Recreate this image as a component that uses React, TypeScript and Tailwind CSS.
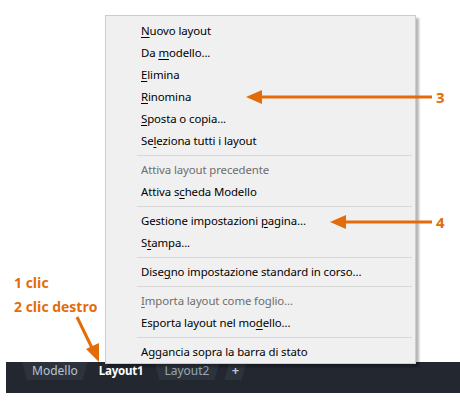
import React from "react";

type Item = { parts: [string, string, string]; disabled?: boolean } | "sep";

const items: Item[] = [
  { parts: ["", "N", "uovo layout"] },
  { parts: ["Da ", "m", "odello..."] },
  { parts: ["", "E", "limina"] },
  { parts: ["", "R", "inomina"] },
  { parts: ["", "S", "posta o copia..."] },
  { parts: ["Se", "l", "eziona tutti i layout"] },
  "sep",
  { parts: ["Attiva layout precedente", "", ""], disabled: true },
  { parts: ["Attiva s", "c", "heda Modello"] },
  "sep",
  { parts: ["Gestione impostazioni ", "p", "agina..."] },
  { parts: ["S", "t", "ampa..."] },
  "sep",
  { parts: ["Dise", "g", "no impostazione standard in corso..."] },
  "sep",
  { parts: ["", "I", "mporta layout come foglio..."], disabled: true },
  { parts: ["Esporta layout nel mo", "d", "ello..."] },
  "sep",
  { parts: ["Aggancia sopra la barra di stato", "", ""] },
];

const ORANGE = "#e36c0a";
const boldFont = { fontFamily: '"Open Sans", "Noto Sans", sans-serif' };

const tabSlant = "[clip-path:polygon(0_0,100%_0,calc(100%-5px)_100%,5px_100%)]";

export default function App() {
  return (
    <div
      className="relative w-[460px] h-[419px] bg-white overflow-hidden flex flex-col"
      style={{ fontFamily: '"Noto Sans", "Open Sans", sans-serif' }}
    >
      {/* annotation text */}
      <div
        className="flex flex-col gap-[4px] pl-[14px] pt-[273px] text-[14px] font-bold leading-[20px] text-[#e36c0a]"
        style={boldFont}
      >
        <div>1 clic</div>
        <div>2 clic destro</div>
      </div>

      {/* tab bar */}
      <div className="ml-[6px] mt-[45px] h-[31px] bg-[#222730]">
        <div className="flex items-start h-[18px] pl-[16px] gap-[3px]">
          <div className={"h-[18px] px-[10px] bg-[#2d333d] text-[#b9c3d0] text-[12px] leading-[17px] " + tabSlant}>
            Modello
          </div>
          <div className="h-[18px] px-[8px] bg-[#222730] text-white font-bold text-[11.5px] tracking-[-0.2px] leading-[17px]">
            Layout1
          </div>
          <div className={"h-[18px] px-[10px] bg-[#2d333d] text-[#9aa5b4] text-[12px] leading-[17px] " + tabSlant}>
            Layout2
          </div>
          <div className="h-[18px] w-[22px] ml-[2px] bg-[#2d333d] text-[#b9c3d0] font-bold text-[13px] leading-[17px] text-center [clip-path:polygon(5px_0,100%_0,calc(100%-5px)_100%,0_100%)]">
            +
          </div>
        </div>
      </div>

      {/* context menu */}
      <div className="absolute left-[105px] top-[15px] w-[311px] bg-[#f0f0f0] border border-[#cccccc] pt-[4px] shadow-[3px_3px_2px_rgba(0,0,0,0.28)] flex flex-col">
        {items.map((it, i) =>
          it === "sep" ? (
            <div key={i} className="h-[7px] flex items-center pl-[31px] pr-[3px]">
              <div className="h-px w-full bg-[#d7d7d7]" />
            </div>
          ) : (
            <div
              key={i}
              className={
                "h-[22px] pl-[35px] text-[11.4px] tracking-[-0.1px] leading-[22px] whitespace-nowrap " +
                (it.disabled ? "text-[#6d6d6d]" : "text-black")
              }
            >
              {it.parts[0]}
              {it.parts[1] && <span className="underline underline-offset-[2px]">{it.parts[1]}</span>}
              {it.parts[2]}
            </div>
          )
        )}
      </div>

      {/* arrows */}
      <svg className="absolute left-0 top-0" width="460" height="419" viewBox="0 0 460 419">
        <line x1="432" y1="97" x2="258" y2="97" stroke={ORANGE} strokeWidth="3" />
        <polygon points="246,97 262,90 262,104" fill={ORANGE} />
        <line x1="432" y1="222" x2="342" y2="222" stroke={ORANGE} strokeWidth="3" />
        <polygon points="330,222 346,215 346,229" fill={ORANGE} />
        <line x1="77" y1="317" x2="93" y2="350" stroke={ORANGE} strokeWidth="3" />
        <polygon points="99,362 86,349 99,343" fill={ORANGE} />
      </svg>
      <div className="absolute left-[436px] top-[87px] text-[15px] font-bold leading-[20px] text-[#e36c0a]" style={boldFont}>
        3
      </div>
      <div className="absolute left-[436px] top-[212px] text-[15px] font-bold leading-[20px] text-[#e36c0a]" style={boldFont}>
        4
      </div>
    </div>
  );
}
